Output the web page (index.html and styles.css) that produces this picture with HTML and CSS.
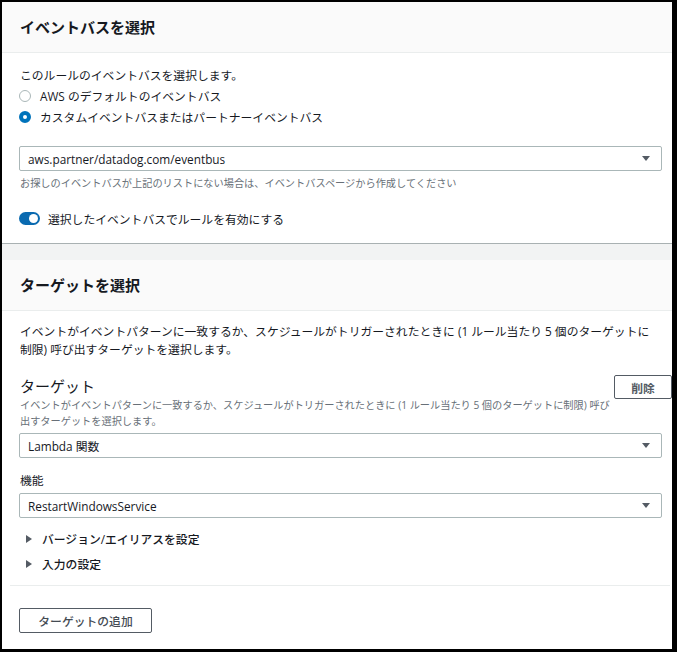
FILE: index.html
```html
<!DOCTYPE html>
<html lang="ja">
<head>
<meta charset="utf-8">
<title>ルールの設定</title>
<link rel="stylesheet" href="styles.css">
</head>
<body>
<div class="frame">
  <section class="panel panel-bus">
    <header class="panel-head"><h2>イベントバスを選択</h2></header>
    <div class="panel-body">
      <p class="intro">このルールのイベントバスを選択します。</p>
      <div class="radios">
        <div class="radio"><span class="dot"></span><span>AWS のデフォルトのイベントバス</span></div>
        <div class="radio checked"><span class="dot"></span><span>カスタムイベントバスまたはパートナーイベントバス</span></div>
      </div>
      <div class="select bus-select"><span>aws.partner/datadog.com/eventbus</span><span class="caret"></span></div>
      <p class="hint">お探しのイベントバスが上記のリストにない場合は、イベントバスページから作成してください</p>
      <div class="toggle-row"><span class="toggle"><span class="knob"></span></span><span>選択したイベントバスでルールを有効にする</span></div>
    </div>
  </section>
  <div class="gap"></div>
  <section class="panel panel-target">
    <header class="panel-head"><h2>ターゲットを選択</h2></header>
    <div class="panel-body">
      <p class="desc">イベントがイベントパターンに一致するか、スケジュールがトリガーされたときに (1 ルール当たり 5 個のターゲットに<br>制限) 呼び出すターゲットを選択します。</p>
      <div class="target-row">
        <div class="target-text">
          <div class="target-label">ターゲット</div>
          <p class="small-desc">イベントがイベントパターンに一致するか、スケジュールがトリガーされたときに (1 ルール当たり 5 個のターゲットに制限) 呼び<br>出すターゲットを選択します。</p>
        </div>
        <button class="btn btn-delete">削除</button>
      </div>
      <div class="select type-select"><span>Lambda 関数</span><span class="caret"></span></div>
      <div class="field-label">機能</div>
      <div class="select func-select"><span>RestartWindowsService</span><span class="caret"></span></div>
      <div class="expander exp-first"><span class="tri"></span><span>バージョン/エイリアスを設定</span></div>
      <div class="expander exp-second"><span class="tri"></span><span>入力の設定</span></div>
      <div class="divider"></div>
      <button class="btn btn-add">ターゲットの追加</button>
    </div>
  </section>
</div>
</body>
</html>
```

FILE: styles.css
```css
html, body {
  margin: 0;
}
body {
  background: #000;
  padding: 2px 5px 3px 2px;
  font-family: "Open Sans", "Noto Sans CJK JP", sans-serif;
  font-size: 11.8px;
  color: #16191f;
}
.frame {
  width: 670px;
  height: 647px;
  background: #fff;
  overflow: hidden;
}
.panel-head {
  height: 50px;
  background: #fafafa;
  border-bottom: 1px solid #eaeded;
  display: flex;
  align-items: center;
  padding: 0 18px;
}
.panel-head h2 {
  margin: 0;
  font-size: 15px;
  font-weight: 700;
  line-height: 20px;
  color: #16191f;
}
.panel-body {
  padding: 0 10px 0 18px;
}
.panel-bus .panel-body {
  padding-bottom: 15px;
}
.panel-bus {
  border-bottom: 1px solid #a9b1b2;
}
.gap {
  height: 16px;
  background: #f2f3f3;
}
p {
  margin: 0;
}
.intro {
  margin-top: 12px;
  line-height: 20px;
}
.radio {
  height: 21px;
  display: flex;
  align-items: center;
  gap: 9px;
}
.dot {
  width: 12px;
  height: 12px;
  box-sizing: border-box;
  border: 1.5px solid #aab7b8;
  border-radius: 50%;
  background: #fff;
  margin-left: -1px;
}
.radio.checked .dot {
  border: 4px solid #0073bb;
}
.select {
  height: 25px;
  box-sizing: border-box;
  border: 1px solid #aab7b8;
  border-radius: 2px;
  margin-left: -1px;
  display: flex;
  align-items: center;
  justify-content: space-between;
  padding: 0 11px 0 8px;
  color: #16191f;
}
.caret {
  width: 0;
  height: 0;
  border-left: 4px solid transparent;
  border-right: 4px solid transparent;
  border-top: 5px solid #545b64;
}
.bus-select {
  margin-top: 19px;
}
.hint {
  margin-top: 4px;
  line-height: 16px;
  font-size: 10.2px;
  color: #687078;
}
.toggle-row {
  margin-top: 17px;
  height: 20px;
  display: flex;
  align-items: center;
  gap: 8px;
}
.toggle {
  width: 21px;
  height: 13px;
  border-radius: 7px;
  background: #0a6ab0;
  margin-left: -1px;
  display: flex;
  align-items: center;
  justify-content: flex-end;
  padding-right: 2px;
  box-sizing: border-box;
}
.knob {
  width: 9px;
  height: 9px;
  border-radius: 50%;
  background: #fff;
}
.desc {
  margin-top: 11px;
  line-height: 18px;
  white-space: nowrap;
}
.target-row {
  margin-top: 17px;
  margin-right: -10px;
  display: flex;
  justify-content: space-between;
  align-items: flex-start;
}
.target-label {
  font-size: 15px;
  line-height: 22px;
}
.small-desc {
  font-size: 10.2px;
  line-height: 16px;
  color: #687078;
  white-space: nowrap;
}
.btn {
  font-family: inherit;
  background: #fff;
  border: 1px solid #545b64;
  border-radius: 2px;
  color: #545b64;
  font-size: 11.8px;
  padding: 0;
  box-sizing: border-box;
}
.btn-delete {
  width: 58px;
  height: 24px;
  font-weight: 700;
}
.type-select {
  margin-top: 4px;
}
.field-label {
  margin-top: 13px;
  line-height: 18px;
}
.func-select {
  margin-top: 4px;
}
.expander {
  display: flex;
  align-items: center;
  line-height: 20px;
  font-weight: 500;
  color: #16191f;
}
.exp-first {
  margin-top: 11px;
}
.exp-second {
  margin-top: 5px;
}
.tri {
  width: 0;
  height: 0;
  border-top: 4px solid transparent;
  border-bottom: 4px solid transparent;
  border-left: 6px solid #545b64;
  margin: 0 10px 0 6px;
}
.divider {
  margin: 11px -8px 0 -10px;
  height: 1px;
  background: #eaeded;
}
.btn-add {
  margin-top: 22px;
  margin-left: -1px;
  width: 133px;
  height: 25px;
  font-weight: 500;
  color: #444b53;
}
```
